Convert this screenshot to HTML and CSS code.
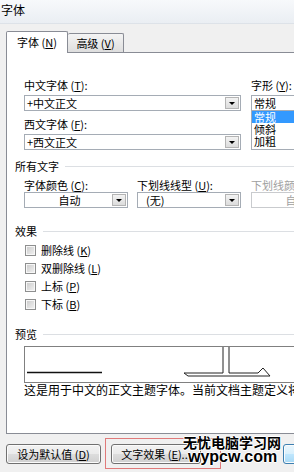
FILE: index.html
```html
<!DOCTYPE html>
<html lang="zh-CN">
<head>
    <meta charset="UTF-8">
    <meta name="viewport" content="width=device-width, initial-scale=1.0">
    <title>字体</title>
    <link rel="stylesheet" href="styles.css">
</head>
<body>
    <div class="titlebar">字体</div>

    <div class="dialog">
        <div class="tabs">
            <div class="tab active">字体 (<u>N</u>)</div>
            <div class="tab second">高级 (<u>V</u>)</div>
        </div>

        <div class="panel">
            <div class="font-row">
                <div class="font-names">
                    <div class="label">中文字体 (<u>T</u>):</div>
                    <div class="combo"><span class="value">+中文正文</span><i class="drop"></i></div>
                    <div class="label second-label">西文字体 (<u>F</u>):</div>
                    <div class="combo"><span class="value">+西文正文</span><i class="drop"></i></div>
                </div>
                <div class="font-style">
                    <div class="label">字形 (<u>Y</u>):</div>
                    <div class="combo"><span class="value">常规</span></div>
                    <ul class="list">
                        <li class="selected">常规</li>
                        <li>倾斜</li>
                        <li>加粗</li>
                    </ul>
                </div>
            </div>

            <div class="group all-text">所有文字</div>
            <div class="cols">
                <div class="col">
                    <div class="label">字体颜色 (<u>C</u>):</div>
                    <div class="combo"><span class="value center">自动</span><i class="drop"></i></div>
                </div>
                <div class="col">
                    <div class="label">下划线线型 (<u>U</u>):</div>
                    <div class="combo"><span class="value indent">(无)</span><i class="drop"></i></div>
                </div>
                <div class="col disabled">
                    <div class="label">下划线颜色 (<u>I</u>):</div>
                    <div class="combo"><span class="value center">自动</span><i class="drop"></i></div>
                </div>
            </div>

            <div class="group effects">效果</div>
            <div class="checks">
                <div class="check"><i class="box"></i>删除线 (<u>K</u>)</div>
                <div class="check"><i class="box"></i>双删除线 (<u>L</u>)</div>
                <div class="check"><i class="box"></i>上标 (<u>P</u>)</div>
                <div class="check"><i class="box"></i>下标 (<u>B</u>)</div>
            </div>

            <div class="group preview-title">预览</div>
            <div class="preview">
                <svg width="318" height="35" viewBox="0 0 318 35">
                    <line x1="2" y1="25.5" x2="77" y2="25.5" stroke="#111" stroke-width="1.3"/>
                    <polyline points="198,0 198,26 159,26 163,29 245,29 238,21 233,26 204,26 204,0" fill="none" stroke="#222" stroke-width="1"/>
                </svg>
            </div>
            <div class="preview-text">这是用于中文的正文主题字体。当前文档主题定义将使用哪种字体。</div>
        </div>

        <div class="buttons">
            <button class="btn default-value">设为默认值 (<u>D</u>)</button>
            <button class="btn effects-btn">文字效果 (<u>E</u>)...</button>
            <button class="btn ok">确定</button>
        </div>
    </div>

    <div class="mark-box"></div>
    <div class="watermark">
        <div class="wm-cn">无忧电脑学习网</div>
        <div class="wm-en">wypcw.com</div>
    </div>
</body>
</html>
```

FILE: styles.css
```css
* {
    box-sizing: border-box;
}
body {
    margin: 0;
    width: 294px;
    height: 472px;
    overflow: hidden;
    position: relative;
    background: #f0f0f0;
    font-family: "Noto Sans CJK SC", "Liberation Sans", sans-serif;
    font-size: 11px;
    color: #000;
}
u {
    text-decoration: underline;
}
.titlebar {
    height: 24px;
    padding-left: 1px;
    line-height: 20px;
    font-size: 12px;
    background: linear-gradient(#f7f9fb, #eaeef3);
    border-bottom: 1px solid #dde2e8;
}
.dialog {
    padding: 7px 0 0 6px;
}
.tabs {
    display: flex;
    align-items: flex-end;
    height: 22px;
    margin-bottom: -1px;
}
.tab {
    height: 19px;
    margin-bottom: 1px;
    display: flex;
    align-items: center;
    justify-content: center;
    white-space: nowrap;
    border: 1px solid #898c95;
    border-bottom: none;
    border-left: none;
    border-radius: 2px 2px 0 0;
    background: linear-gradient(#f4f4f4, #dedede);
}
.tab.active {
    position: relative;
    z-index: 1;
    width: 62px;
    height: 22px;
    margin-bottom: 0;
    padding-bottom: 1px;
    background: #fff;
    border-left: 1px solid #898c95;
}
.tab.second {
    width: 56px;
}
.panel {
    width: 330px;
    height: 382px;
    padding: 26px 0 0 8px;
    background: #fff;
    border: 1px solid #898c95;
}
.label {
    line-height: 13px;
    white-space: nowrap;
}
.second-label {
    margin-top: 7px;
}
.font-row {
    display: flex;
    padding-left: 9px;
}
.font-names {
    width: 217px;
    flex: none;
}
.font-style {
    width: 90px;
    flex: none;
    margin-left: 10px;
}
.combo {
    height: 16px;
    margin-top: 3px;
    display: flex;
    align-items: center;
    background: #fff;
    border: 1px solid #a5acb5;
}
.combo .value {
    flex: 1;
    padding-left: 2px;
    line-height: 14px;
    white-space: nowrap;
}
.combo .value.center {
    text-align: center;
}
.combo .value.indent {
    padding-left: 8px;
}
.drop {
    width: 14px;
    height: 12px;
    margin-right: 1px;
    display: flex;
    align-items: center;
    justify-content: center;
    border: 1px solid #b4b4b4;
    background: linear-gradient(#f3f3f3, #dcdcdc);
}
.drop::after {
    content: "";
    border-left: 3px solid transparent;
    border-right: 3px solid transparent;
    border-top: 3px solid #000;
}
.list {
    margin: 0;
    padding: 0;
    list-style: none;
    height: 39px;
    border: 1px solid #a5acb5;
    border-top: none;
}
.list li {
    line-height: 12px;
    padding-left: 2px;
}
.list li.selected {
    background: #3399ff;
    color: #fff;
}
.group {
    display: flex;
    align-items: center;
    line-height: 13px;
    white-space: nowrap;
}
.group::after {
    content: "";
    flex: 1;
    margin-left: 6px;
    border-top: 1px solid #dcdfe3;
}
.all-text {
    margin-top: 10px;
}
.cols {
    display: flex;
    gap: 9px;
    margin-top: 6px;
    padding-left: 9px;
}
.col {
    width: 104px;
    flex: none;
}
.col .combo {
    margin-top: 0;
}
.col.disabled {
    color: #a0a0a0;
    margin-left: 1px;
}
.col.disabled .combo {
    border-color: #c9cbce;
}
.col.disabled .drop {
    opacity: 0.5;
}
.effects {
    margin-top: 17px;
}
.checks {
    margin-top: 3px;
    padding-left: 10px;
}
.check {
    height: 18px;
    display: flex;
    align-items: center;
    white-space: nowrap;
}
.box {
    width: 11px;
    height: 11px;
    margin-right: 5px;
    border: 1px solid #8e8f8f;
    box-shadow: inset 0 0 0 1px #f7f7f7;
    background: linear-gradient(135deg, #c9c9c9, #f3f3f3);
}
.preview-title {
    margin-top: 15px;
}
.preview {
    width: 320px;
    height: 37px;
    margin: 5px 0 0 9px;
    border: 1px solid #808080;
}
.preview svg {
    display: block;
}
.preview-text {
    margin-left: 9px;
    font-size: 12px;
    line-height: 14px;
    white-space: nowrap;
}
.buttons {
    display: flex;
    margin-top: 10px;
}
.btn {
    flex: none;
    height: 20px;
    padding: 0;
    font-family: inherit;
    font-size: 11px;
    color: #000;
    white-space: nowrap;
    border: 1px solid #707070;
    border-radius: 3px;
    box-shadow: inset 0 0 0 1px #fbfbfb;
    background: linear-gradient(#f2f2f2 0%, #ebebeb 48%, #dddddd 52%, #cfcfcf 100%);
}
.default-value {
    width: 95px;
}
.effects-btn {
    width: 90px;
    margin-left: 10px;
}
.ok {
    width: 60px;
    margin-left: 82px;
    border-color: #3c7fb1;
    background: linear-gradient(#eaf6fd 0%, #d9f0fc 48%, #bee6fd 52%, #a7d9f5 100%);
}
.mark-box {
    position: absolute;
    left: 105px;
    top: 438px;
    width: 116px;
    height: 31px;
    border: 1px solid #e07a7a;
}
.watermark {
    position: absolute;
    left: 183px;
    top: 434px;
    font-weight: bold;
    text-shadow: 1px 0 0 #fff, -1px 0 0 #fff, 0 1px 0 #fff, 0 -1px 0 #fff;
}
.wm-cn {
    font-size: 14px;
    line-height: 16px;
}
.wm-en {
    font-family: "Liberation Sans", sans-serif;
    font-size: 16px;
    line-height: 14px;
    margin-left: 5px;
}
```
